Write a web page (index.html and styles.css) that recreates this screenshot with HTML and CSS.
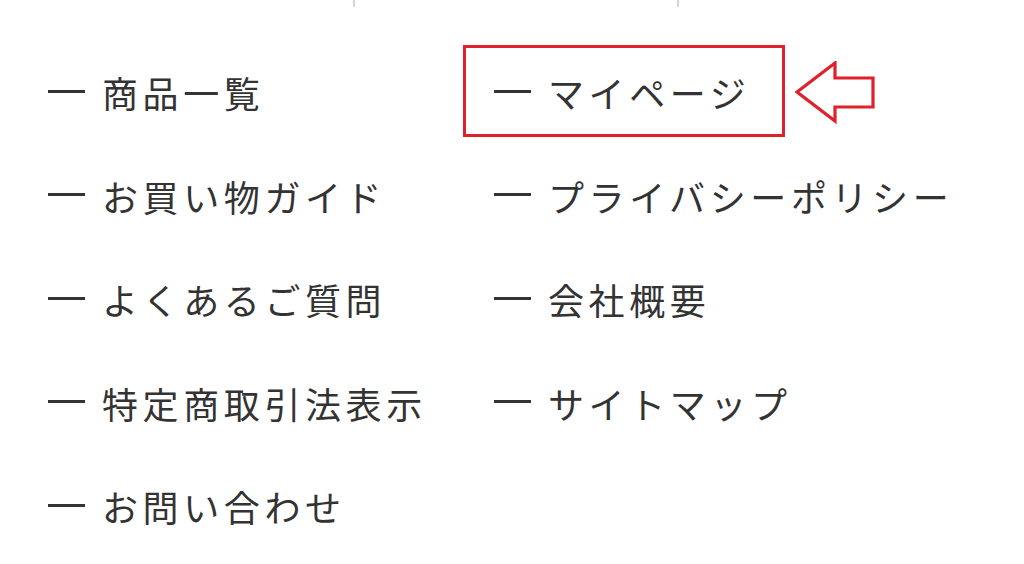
FILE: index.html
```html
<!DOCTYPE html>
<html lang="ja">
<head>
<meta charset="utf-8">
<link rel="stylesheet" href="styles.css">
</head>
<body>
<div class="topbar">
  <div class="cell"></div>
  <div class="cell"></div>
  <div class="cell"></div>
</div>
<ul class="links">
  <li><span class="dash"></span>商品一覧</li>
  <li><span class="dash"></span>マイページ</li>
  <li><span class="dash"></span>お買い物ガイド</li>
  <li><span class="dash"></span>プライバシーポリシー</li>
  <li><span class="dash"></span>よくあるご質問</li>
  <li><span class="dash"></span>会社概要</li>
  <li><span class="dash"></span>特定商取引法表示</li>
  <li><span class="dash"></span>サイトマップ</li>
  <li><span class="dash"></span>お問い合わせ</li>
</ul>
<div class="highlight"></div>
<svg class="arrow" width="84" height="64" viewBox="0 0 84 64">
  <polygon points="2,31 40,2 40,17 78,17 78,46 40,46 40,60" fill="none" stroke="#e0212b" stroke-width="3.2" stroke-linejoin="miter"/>
</svg>
</body>
</html>
```

FILE: styles.css
```css
html, body {
  margin: 0;
  padding: 0;
  background: #fff;
}
body {
  width: 1024px;
  height: 564px;
  overflow: hidden;
  position: relative;
  font-family: "Noto Sans CJK JP", "Noto Sans", sans-serif;
  color: #333;
}
.topbar {
  display: flex;
  height: 7px;
  padding-left: 31px;
}
.cell {
  width: 322px;
}
.cell + .cell {
  border-left: 2px solid #d6d6d6;
}
.links {
  list-style: none;
  margin: 0;
  padding: 58px 0 0 48px;
  display: grid;
  grid-template-columns: 446px auto;
  row-gap: 49.5px;
}
.links li {
  display: flex;
  align-items: center;
  font-size: 36px;
  line-height: 54px;
  letter-spacing: 4.6px;
  white-space: nowrap;
}
.dash {
  display: inline-block;
  width: 37px;
  height: 3px;
  background: #333;
  margin-right: 17px;
  position: relative;
  top: -1px;
}
.highlight {
  position: absolute;
  left: 463px;
  top: 45px;
  width: 316px;
  height: 86px;
  border: 3px solid #e0212b;
}
.arrow {
  position: absolute;
  left: 795px;
  top: 61px;
}
```
